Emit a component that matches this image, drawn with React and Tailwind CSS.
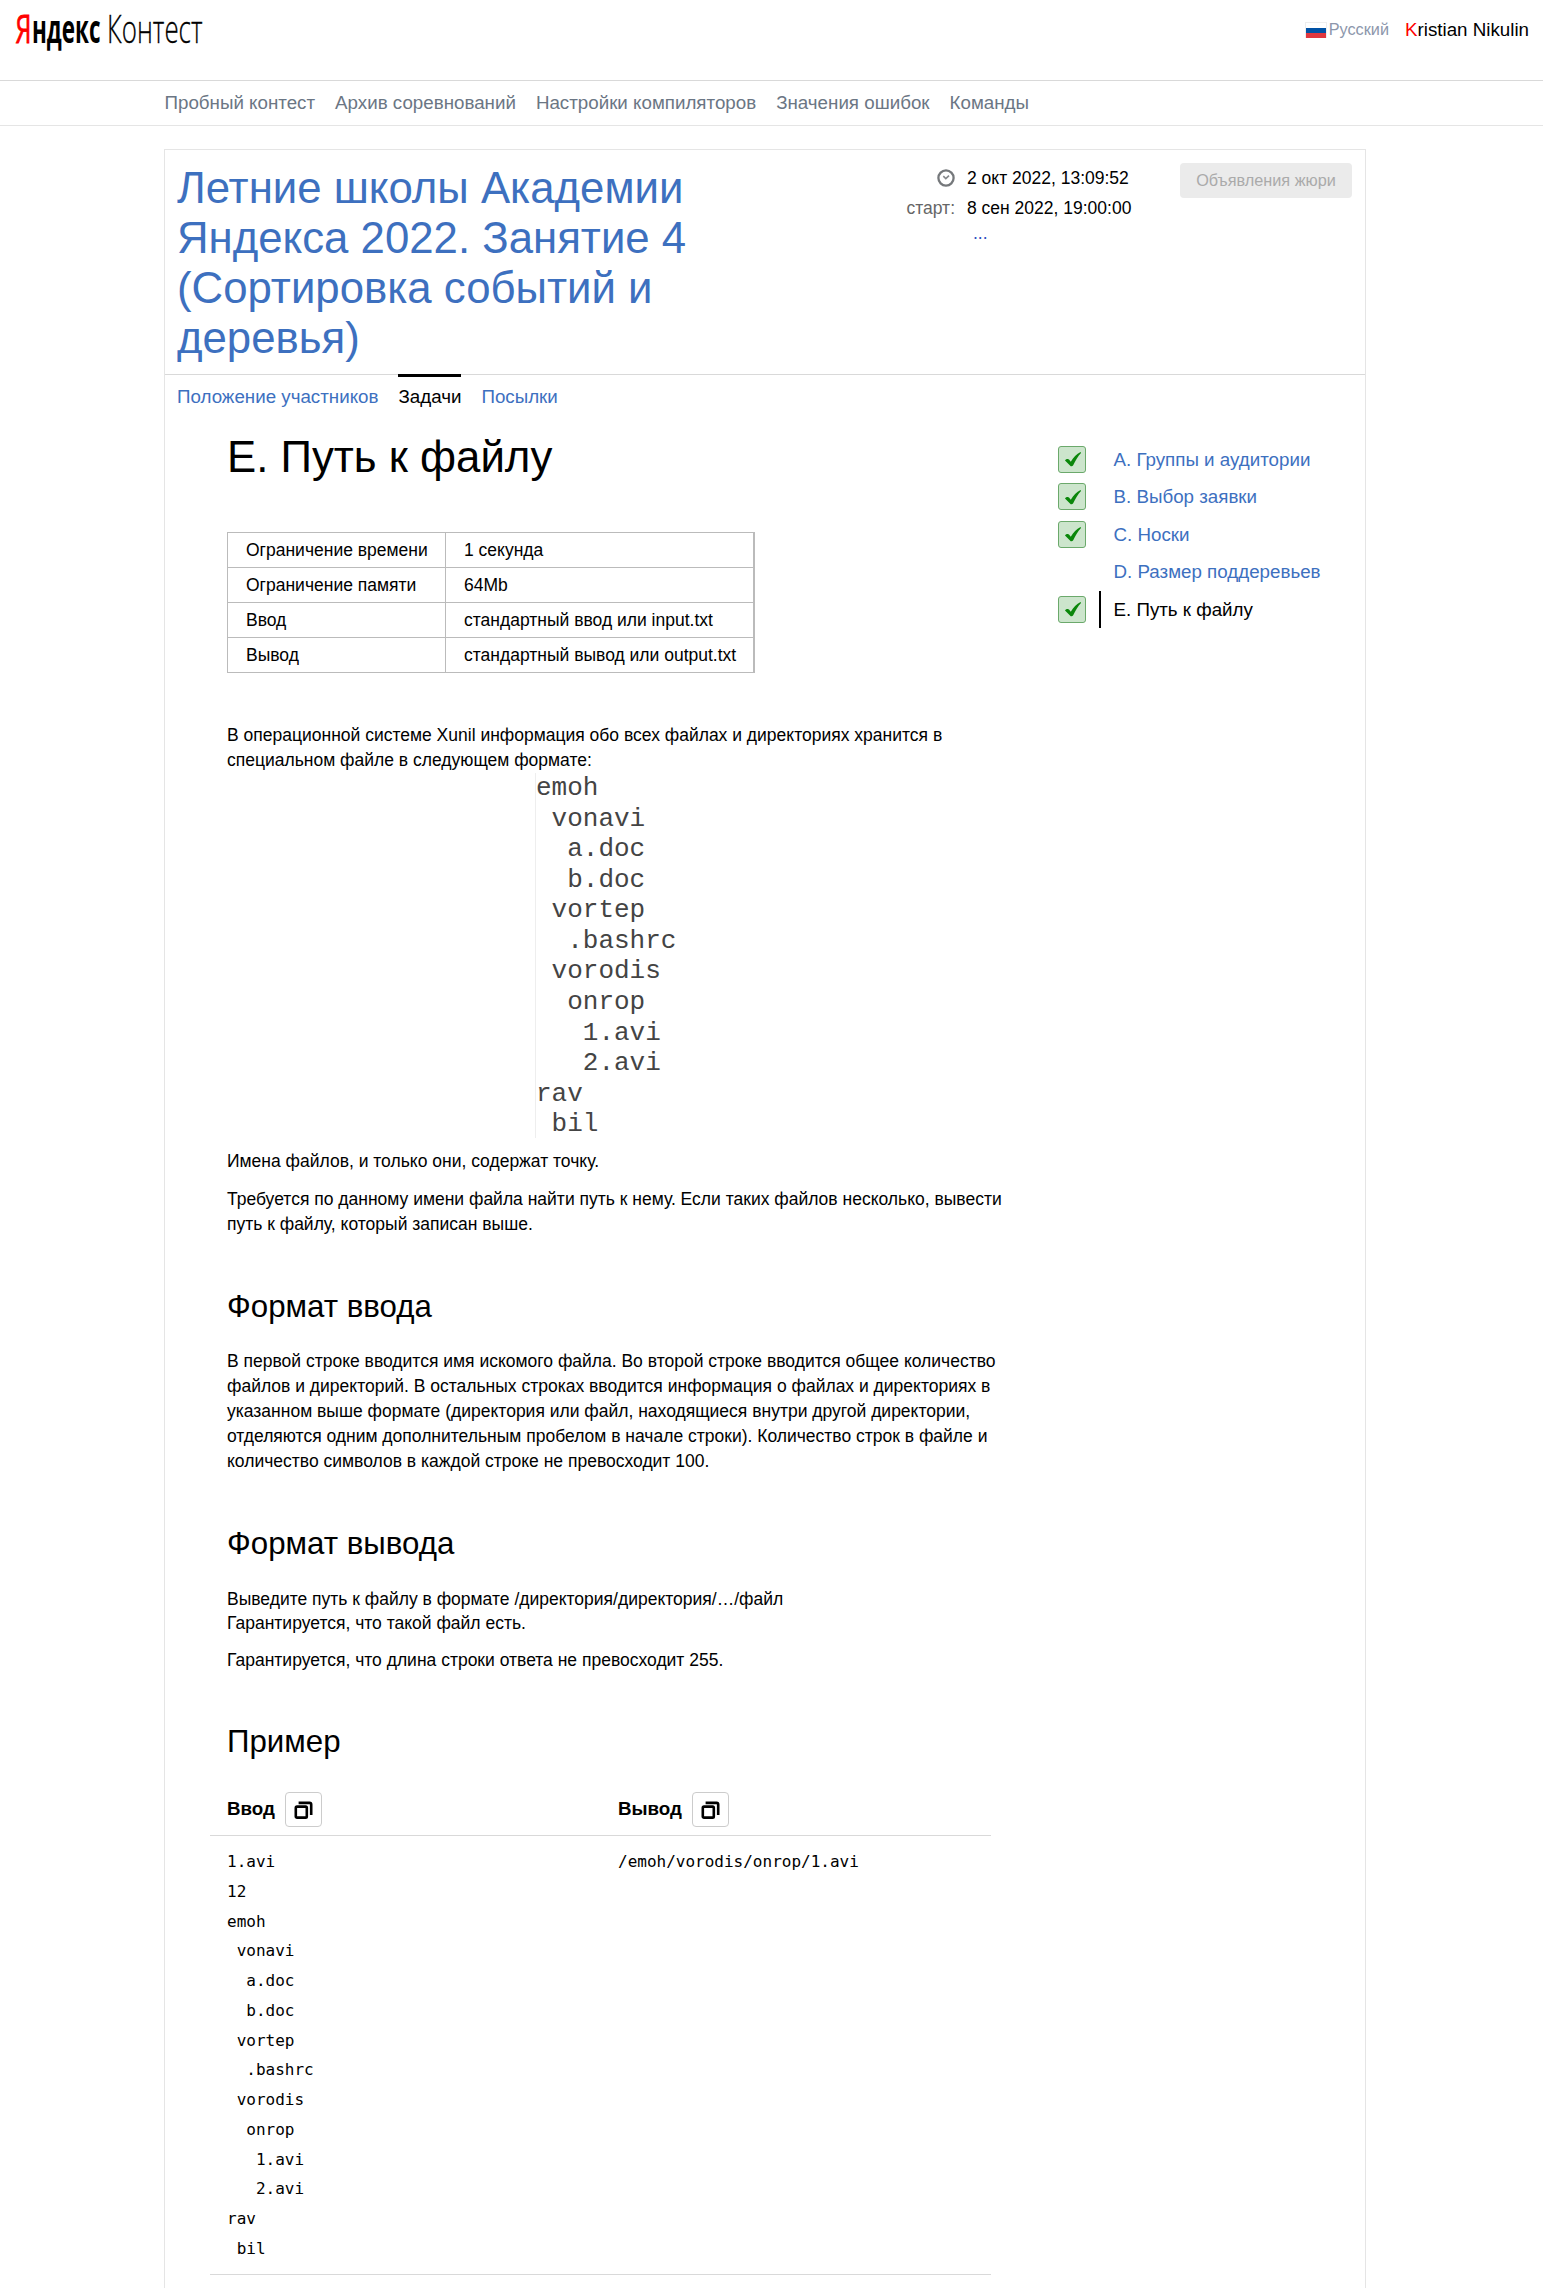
const SAMPLE_INPUT = `1.avi
12
emoh
 vonavi
  a.doc
  b.doc
 vortep
  .bashrc
 vorodis
  onrop
   1.avi
   2.avi
rav
 bil`;

const TREE = `emoh
 vonavi
  a.doc
  b.doc
 vortep
  .bashrc
 vorodis
  onrop
   1.avi
   2.avi
rav
 bil`;

const NAV = ["Пробный контест", "Архив соревнований", "Настройки компиляторов", "Значения ошибок", "Команды"];

const LIMITS = [
  ["Ограничение времени", "1 секунда"],
  ["Ограничение памяти", "64Mb"],
  ["Ввод", "стандартный ввод или input.txt"],
  ["Вывод", "стандартный вывод или output.txt"],
];

const PROBLEMS = [
  { name: "A. Группы и аудитории", solved: true },
  { name: "B. Выбор заявки", solved: true },
  { name: "C. Носки", solved: true },
  { name: "D. Размер поддеревьев", solved: false },
  { name: "E. Путь к файлу", solved: true, active: true },
];

function Logo() {
  return (
    <svg width="260" height="60" viewBox="0 0 260 60" className="block overflow-visible" fontFamily='"Open Sans", sans-serif' fontSize="38.5">
      <text x="-0.5" y="42.5" fill="#ff0000" stroke="#ff0000" strokeWidth="0.8" fontWeight="400" textLength="16" lengthAdjust="spacingAndGlyphs">Я</text>
      <text x="16" y="42.5" fill="#000" fontWeight="700" textLength="68.5" lengthAdjust="spacingAndGlyphs">ндекс</text>
      <text x="91" y="42.5" fill="#000" stroke="#000" strokeWidth="0.3" fontWeight="300" textLength="95.5" lengthAdjust="spacingAndGlyphs">Контест</text>
    </svg>
  );
}

function Flag() {
  return (
    <span className="flex h-[16px] w-[22px] flex-col border border-[#eeeeee] border-b-0">
      <span className="h-[5px] bg-white" />
      <span className="h-[5px] bg-[#0052a5]" />
      <span className="h-[5px] bg-[#e0373e]" />
    </span>
  );
}

function Clock() {
  return (
    <svg width="18" height="18" viewBox="0 0 18 18" fill="none" className="block">
      <circle cx="9" cy="9" r="7.6" stroke="#75787b" strokeWidth="2.3" />
      <path d="M6.3 7.2 8.8 9.6 12 6.6" stroke="#85888b" strokeWidth="1.6" />
    </svg>
  );
}

function Solved() {
  return (
    <span className="flex h-[27px] w-[28px] items-center justify-center rounded-[3px] border border-[#6ba96b] bg-[#cce5cc] pl-[2px]">
      <svg width="18" height="18" viewBox="0 0 18 18" className="block">
        <path d="M1 10.4C2 9 4.4 8.6 5 9.6L6.8 11.8C9.2 7.8 12.6 3.8 16.6 2L17 3C14 6.2 11.6 10.4 9.2 15.2 8.4 16.6 6.8 16.6 6 15.4Z" fill="#0a870a" />
      </svg>
    </span>
  );
}

function CopyButton() {
  return (
    <button className="flex h-[35px] w-[37px] items-center justify-center rounded-[4px] border border-[#cccccc] bg-white">
      <svg width="20" height="20" viewBox="0 0 20 20" fill="none" stroke="#000" strokeWidth="2.6" className="block">
        <rect x="2.8" y="6.6" width="11" height="11" rx="1.2" />
        <path d="M5.6 2.9H16.6Q18.2 2.9 18.2 4.5V15" />
      </svg>
    </button>
  );
}

export default function App() {
  return (
    <div className="h-[2288px] w-[1543px] overflow-hidden bg-white font-['Liberation_Sans',Arial,sans-serif] text-[17.5px] leading-[25px] whitespace-nowrap text-black">
      <header className="flex h-[81px] items-start justify-between border-b border-[#d9d9d9] pr-[14px] pl-[16px]">
        <Logo />
        <div className="flex items-center pt-[17px]">
          <Flag />
          <span className="ml-[2px] text-[16.25px] text-[#8c96ab]">Русский</span>
          <span className="ml-[16px] text-[18.75px]">
            <span className="text-[#ff0000]">K</span>ristian Nikulin
          </span>
        </div>
      </header>

      <nav className="flex h-[45px] items-center gap-[20px] border-b border-[#e5e5e5] pb-px pl-[164.5px] text-[18.75px] text-[#6b7684]">
        {NAV.map((item) => (
          <a key={item}>{item}</a>
        ))}
      </nav>

      <main className="mt-[23px] ml-[164px] h-[2160px] w-[1202px] border border-[#e5e5e5]">
        <div className="flex h-[225px] items-start border-b border-[#d9d9d9] pt-[13px] pl-[12px]">
          <h1 className="w-[700px] text-[43.75px] leading-[50px] text-[#3d70bf]">
            Летние школы Академии
            <br />
            Яндекса 2022. Занятие 4
            <br />
            (Сортировка событий и
            <br />
            деревья)
          </h1>
          <div className="grid w-[303px] grid-cols-[78px_1fr] gap-x-[12px] leading-[30px]">
            <span className="flex h-[30px] items-center justify-end">
              <Clock />
            </span>
            <span>2 окт 2022, 13:09:52</span>
            <span className="text-right text-[#666666]">старт:</span>
            <span>8 сен 2022, 19:00:00</span>
            <span />
            <span className="pl-[6px] leading-[20px] text-[#2e4fbf]">...</span>
          </div>
          <button className="h-[35px] w-[172px] rounded-[4px] bg-[#ebebeb] text-[16.25px] text-[#aaaaaa]">
            Объявления жюри
          </button>
        </div>

        <div className="-mt-px flex h-[45px] gap-[20px] pl-[12px] text-[18.75px] leading-[40px] text-[#3d70bf]">
          <a className="border-t-[3px] border-transparent">Положение участников</a>
          <a className="border-t-[3px] border-black text-black">Задачи</a>
          <a className="border-t-[3px] border-transparent">Посылки</a>
        </div>

        <div className="flex">
          <article className="w-[831px] pl-[62px]">
            <h2 className="mt-[13px] text-[43.75px] leading-[50px]">E. Путь к файлу</h2>

            <table className="mt-[50px] w-[528px] border-collapse border border-r-2 border-[#bbbbbb] leading-[25px]">
              <tbody>
                {LIMITS.map(([name, value]) => (
                  <tr key={name} className="h-[35px]">
                    <td className="w-[218px] border border-[#bbbbbb] pl-[18px]">{name}</td>
                    <td className="border border-r-2 border-[#bbbbbb] pl-[18px]">{value}</td>
                  </tr>
                ))}
              </tbody>
            </table>

            <p className="mt-[50px]">
              В операционной системе Xunil информация обо всех файлах и директориях хранится в
              <br />
              специальном файле в следующем формате:
            </p>
            <pre className="ml-[308px] h-[365px] border-l border-[#eeeeee] font-['Liberation_Mono','Courier_New',monospace] text-[26px] leading-[30.57px] text-[#444444]">
              {TREE}
            </pre>
            <p className="mt-[11px]">Имена файлов, и только они, содержат точку.</p>
            <p className="mt-[13px]">
              Требуется по данному имени файла найти путь к нему. Если таких файлов несколько, вывести
              <br />
              путь к файлу, который записан выше.
            </p>

            <h3 className="mt-[52px] text-[31.25px] leading-[36px]">Формат ввода</h3>
            <p className="mt-[24px]">
              В первой строке вводится имя искомого файла. Во второй строке вводится общее количество
              <br />
              файлов и директорий. В остальных строках вводится информация о файлах и директориях в
              <br />
              указанном выше формате (директория или файл, находящиеся внутри другой директории,
              <br />
              отделяются одним дополнительным пробелом в начале строки). Количество строк в файле и
              <br />
              количество символов в каждой строке не превосходит 100.
            </p>

            <h3 className="mt-[52px] text-[31.25px] leading-[36px]">Формат вывода</h3>
            <p className="mt-[25px] leading-[24px]">
              Выведите путь к файлу в формате /директория/директория/…/файл
              <br />
              Гарантируется, что такой файл есть.
            </p>
            <p className="mt-[13px] leading-[24px]">Гарантируется, что длина строки ответа не превосходит 255.</p>

            <h3 className="mt-[52px] text-[31.25px] leading-[36px]">Пример</h3>
            <div className="mt-[25px] -ml-[17px] w-[781px]">
              <div className="grid h-[51px] grid-cols-[391px_390px] border-b border-[#d9d9d9] pl-[17px] text-[18.75px] font-bold">
                <div className="flex h-[50px] items-start gap-[10px] pt-[7px]">
                  <span className="leading-[34px]">Ввод</span>
                  <CopyButton />
                </div>
                <div className="flex h-[50px] items-start gap-[10px] pt-[7px]">
                  <span className="leading-[34px]">Вывод</span>
                  <CopyButton />
                </div>
              </div>
              <div className="grid h-[439px] grid-cols-[391px_390px] border-b border-[#d9d9d9] pt-[11px] pl-[17px] text-[16px] leading-[29.75px]">
                <pre className="font-['DejaVu_Sans_Mono',monospace]">{SAMPLE_INPUT}</pre>
                <pre className="font-['DejaVu_Sans_Mono',monospace]">/emoh/vorodis/onrop/1.avi</pre>
              </div>
            </div>
          </article>

          <aside className="mt-[21.5px] flex flex-col pl-[62px] text-[18.75px] leading-[37px] text-[#3d70bf]">
            {PROBLEMS.map((p) => (
              <div key={p.name} className="flex h-[37.5px] items-center">
                <span className="w-[41px]">{p.solved && <Solved />}</span>
                <span className={p.active ? "border-l-2 border-black pl-[12.5px] text-black" : "border-l-2 border-transparent pl-[12.5px]"}>
                  {p.name}
                </span>
              </div>
            ))}
          </aside>
        </div>
      </main>
    </div>
  );
}
